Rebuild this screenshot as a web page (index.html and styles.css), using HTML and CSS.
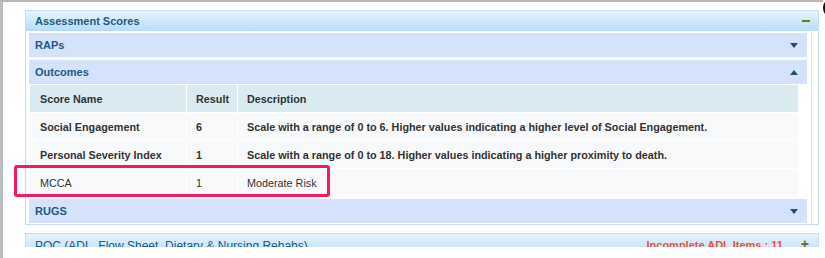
FILE: index.html
```html
<!DOCTYPE html>
<html>
<head>
<meta charset="utf-8">
<link rel="stylesheet" href="styles.css">
</head>
<body>
<div class="window">
  <div class="viewport">
    <section class="panel">
      <header class="panel-head">
        <span class="panel-title">Assessment Scores</span>
        <span class="minus"></span>
      </header>
      <div class="panel-body">
        <div class="inner">
          <div class="bar"><span>RAPs</span><span class="tri down"></span></div>
          <div class="bar"><span>Outcomes</span><span class="tri up"></span></div>
          <table class="scores">
            <thead>
              <tr><th class="c1">Score Name</th><th class="c2">Result</th><th class="c3">Description</th></tr>
            </thead>
            <tbody>
              <tr class="strong"><td class="c1">Social Engagement</td><td class="c2">6</td><td class="c3">Scale with a range of 0 to 6. Higher values indicating a higher level of Social Engagement.</td></tr>
              <tr class="strong"><td class="c1">Personal Severity Index</td><td class="c2">1</td><td class="c3">Scale with a range of 0 to 18. Higher values indicating a higher proximity to death.</td></tr>
              <tr><td class="c1">MCCA</td><td class="c2">1</td><td class="c3">Moderate Risk</td></tr>
            </tbody>
          </table>
          <div class="bar rugs"><span>RUGS</span><span class="tri down"></span></div>
        </div>
      </div>
    </section>
    <section class="panel poc">
      <header class="panel-head">
        <span class="panel-title light">POC (ADL, Flow Sheet, Dietary &amp; Nursing Rehabs)</span>
        <span class="warn">Incomplete ADL Items : 11</span>
        <span class="plus">+</span>
      </header>
    </section>
  </div>
  <div class="highlight"></div>
  <div class="close"></div>
</div>
</body>
</html>
```
FILE: styles.css
```css
html, body {
  margin: 0;
  padding: 0;
  background: #fff;
  overflow: hidden;
}
body {
  width: 825px;
  height: 258px;
  font-family: "Liberation Sans", Arial, sans-serif;
  font-size: 11px;
  color: #333;
}
.window {
  position: relative;
  height: 256px;
  border-top: 2px solid #b8b8b8;
  border-left: 3px solid #bdbdbd;
  box-sizing: content-box;
}
.viewport {
  height: 245px;
  overflow: hidden;
  padding: 8px 0 0 22px;
  box-sizing: border-box;
}
.panel {
  width: 794px;
  box-sizing: border-box;
  border: 1px solid #c8ddee;
  background: #fff;
}
.panel-head {
  height: 20px;
  display: flex;
  align-items: center;
  padding: 0 9px 0 9px;
  background: linear-gradient(#e7f4fd, #b8dbf5);
}
.panel-title {
  flex: 1;
  font-weight: bold;
  font-size: 11px;
  color: #1d5887;
}
.minus {
  width: 8px;
  height: 2px;
  background: #6a7a2c;
  margin-right: -1px;
}
.panel-body {
  padding: 2px 6px 1px 3px;
}
.inner {
  border-right: 1px solid #d3e3f1;
  padding-right: 4px;
}
.bar {
  height: 24px;
  display: flex;
  align-items: center;
  justify-content: space-between;
  padding: 0 9px 0 6px;
  background: #d5e2fb;
  font-weight: bold;
  font-size: 11px;
  color: #1d5887;
  margin-bottom: 3px;
}
.bar.rugs {
  margin-bottom: 0;
}
.tri {
  width: 0;
  height: 0;
  border-left: 4px solid transparent;
  border-right: 4px solid transparent;
}
.tri.down {
  border-top: 5px solid #1b4f7e;
}
.tri.up {
  border-bottom: 5px solid #1b4f7e;
}
.scores {
  width: 770px;
  border-collapse: separate;
  border-spacing: 1px;
  margin: -3px 0 2px 0;
  background: #fff;
  font-size: 10.8px;
}
.scores th, .scores td {
  height: 27px;
  padding: 0 0 0 9px;
  text-align: left;
  white-space: nowrap;
}
.scores th {
  background: #d9eaf1;
  font-weight: bold;
  color: #333;
}
.scores td {
  background: #f8f9fb;
  color: #333;
}
.scores tr.strong td {
  font-weight: bold;
}
.scores .c1 { width: 146px; padding-left: 10px; }
.scores .c2 { width: 41px; }
.poc {
  margin-top: 8px;
}
.poc .panel-head {
  height: 22px;
  align-items: flex-start;
  padding-top: 5px;
  box-sizing: border-box;
}
.panel-title.light {
  font-weight: normal;
  font-size: 12px;
}
.warn {
  color: #f0503c;
  font-weight: bold;
  font-size: 11px;
  margin-right: 18px;
}
.plus {
  color: #5d6d26;
  font-weight: bold;
  font-size: 14px;
  line-height: 10px;
}
.highlight {
  position: absolute;
  left: 11px;
  top: 163px;
  width: 316px;
  height: 32px;
  box-sizing: border-box;
  border: 3px solid #f21c5b;
  border-radius: 3px;
}
.close {
  position: absolute;
  left: 818px;
  top: -7px;
  width: 22px;
  height: 22px;
  border-radius: 50%;
  background: #111;
  border: 2px solid #fff;
}
```
